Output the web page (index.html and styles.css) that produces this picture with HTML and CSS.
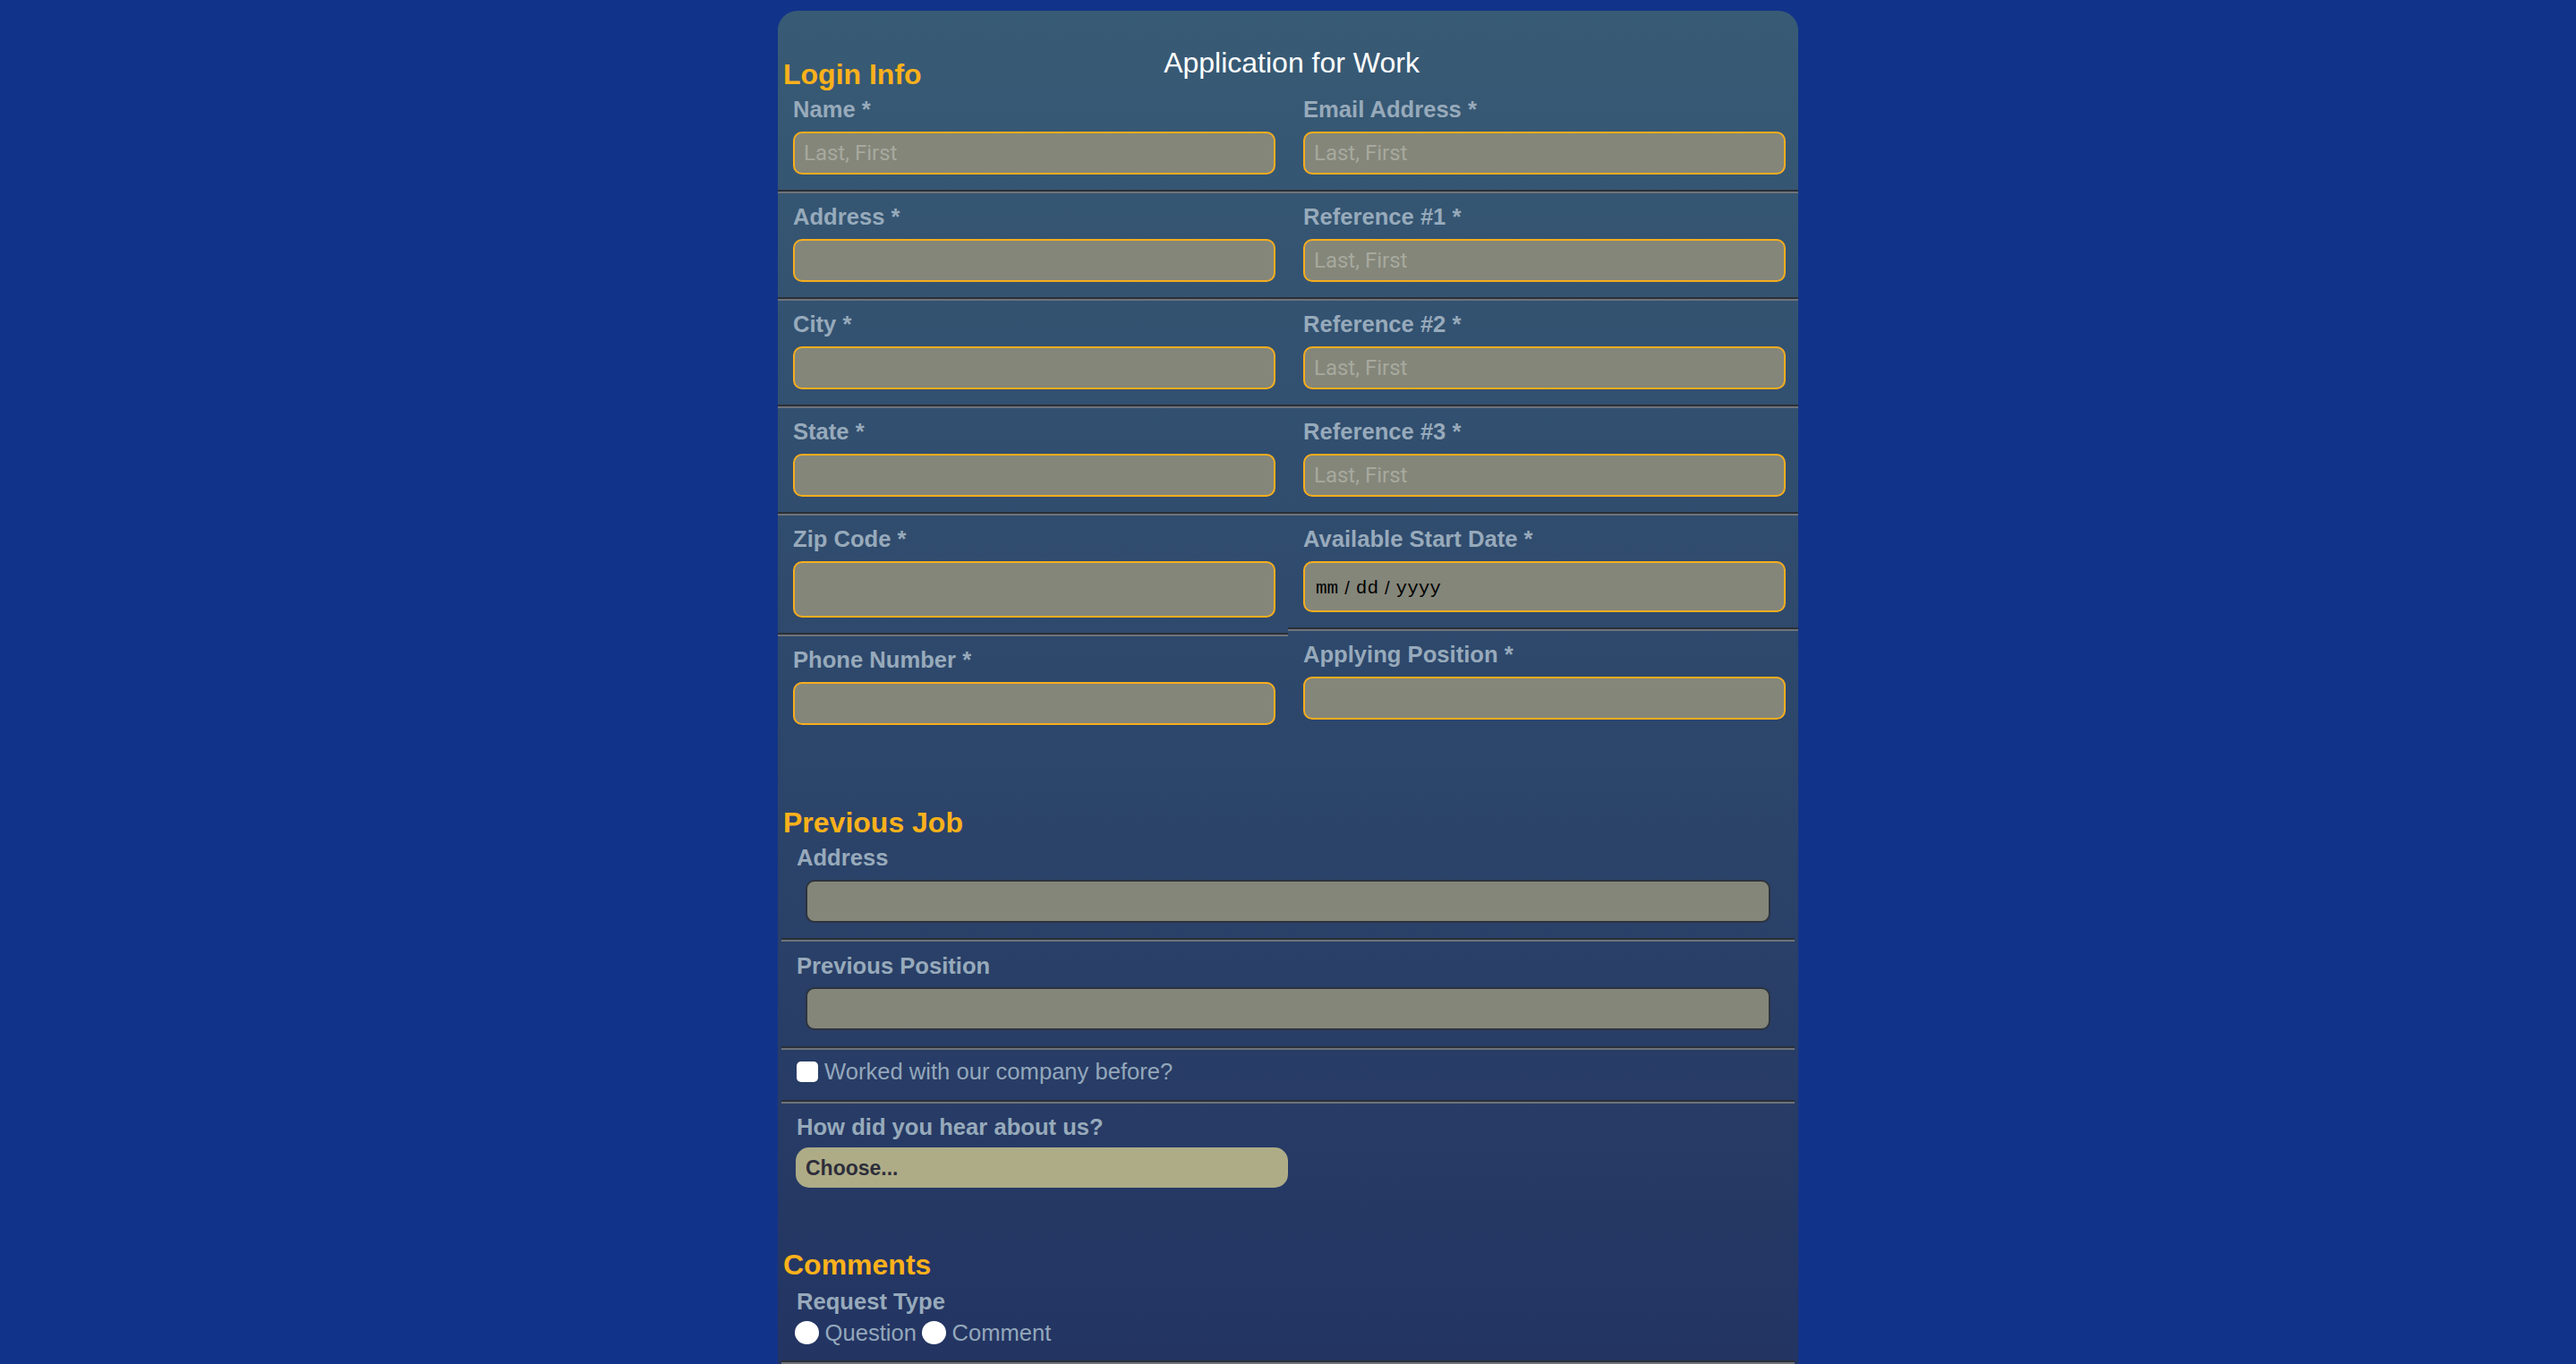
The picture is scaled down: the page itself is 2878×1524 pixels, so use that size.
FILE: index.html
```html
<!DOCTYPE html>
<html lang="en">
<head>
<meta charset="utf-8">
<title>Application for Work</title>
<link rel="stylesheet" href="styles.css">
</head>
<body>
<form class="app">
  <div class="head">
    <h1 class="title">Application for Work</h1>
    <h2 class="section-title login-title">Login Info</h2>
  </div>

  <div class="cols">
    <ul class="col">
      <li class="field"><label>Name *</label><input class="inp" type="text" placeholder="Last, First"></li>
      <li class="field"><label>Address *</label><input class="inp" type="text"></li>
      <li class="field"><label>City *</label><input class="inp" type="text"></li>
      <li class="field"><label>State *</label><input class="inp" type="text"></li>
      <li class="field"><label>Zip Code *</label><input class="inp inp-zip" type="text"></li>
      <li class="field"><label>Phone Number *</label><input class="inp" type="text"></li>
    </ul>
    <ul class="col">
      <li class="field"><label>Email Address *</label><input class="inp" type="text" placeholder="Last, First"></li>
      <li class="field"><label>Reference #1 *</label><input class="inp" type="text" placeholder="Last, First"></li>
      <li class="field"><label>Reference #2 *</label><input class="inp" type="text" placeholder="Last, First"></li>
      <li class="field"><label>Reference #3 *</label><input class="inp" type="text" placeholder="Last, First"></li>
      <li class="field"><label>Available Start Date *</label>
        <div class="inp inp-date" role="textbox"><span class="seg">mm</span><span class="sep">/</span><span class="seg">dd</span><span class="sep">/</span><span class="seg">yyyy</span></div>
      </li>
      <li class="field"><label>Applying Position *</label><input class="inp" type="text"></li>
    </ul>
  </div>

  <h2 class="section-title job-title">Previous Job</h2>
  <ul class="list">
    <li class="field wide"><label>Address</label><input class="inp inp-dark" type="text"></li>
    <li class="field wide"><label>Previous Position</label><input class="inp inp-dark" type="text"></li>
    <li class="field check-row"><input class="check" type="checkbox" id="worked"><label for="worked" class="plain">Worked with our company before?</label></li>
    <li class="field select-row"><label>How did you hear about us?</label>
      <select class="choose">
        <option>Choose...</option>
        <option>Friend</option>
        <option>Website</option>
      </select>
    </li>
  </ul>

  <h2 class="section-title comments-title">Comments</h2>
  <ul class="list">
    <li class="field radio-row"><label>Request Type</label>
      <div class="radios">
        <input class="radio" type="radio" name="req" id="q"><label for="q" class="plain">Question</label>
        <input class="radio" type="radio" name="req" id="c"><label for="c" class="plain">Comment</label>
      </div>
    </li>
  </ul>
</form>
</body>
</html>
```

FILE: styles.css
```css
html {
  scrollbar-width: none;
}
html::-webkit-scrollbar {
  display: none;
}
body {
  margin: 0;
  background: #12338a;
  font-family: "Liberation Sans", Arial, sans-serif;
}
.app {
  width: 1140px;
  margin: 12px auto 0;
  border-radius: 22px 22px 0 0;
  background: linear-gradient(to bottom, #385b75 0px, #233462 1512px);
  padding-bottom: 200px;
}
.head {
  display: grid;
  height: 83.7px;
}
.head > * {
  grid-area: 1 / 1;
}
.title {
  margin: 0;
  padding-top: 46.1px;
  padding-left: 8px;
  font-size: 32px;
  font-weight: normal;
  line-height: 25px;
  color: #ffffff;
  text-align: center;
}
.section-title {
  margin: 0;
  padding-left: 6px;
  font-size: 32px;
  font-weight: bold;
  line-height: 25px;
  color: #fbb11b;
}
.login-title {
  padding-top: 58.7px;
}
.job-title {
  margin-top: 79px;
  line-height: 26px;
}
.comments-title {
  margin-top: 74px;
}
.cols {
  display: grid;
  grid-template-columns: 1fr 1fr;
  align-items: start;
}
.col, .list {
  list-style: none;
  margin: 0;
  padding: 0;
}
.list {
  margin: 0 4px;
}
.field {
  padding: 12.5px 14px 17px 17px;
  border-bottom: 2px solid #2a3038;
  box-shadow: 0 2px 0 #6e737a;
  margin-bottom: 2px;
}
.col .field:last-child {
  border-bottom: none;
  box-shadow: none;
  margin-bottom: 0;
}
.field > label {
  display: block;
  font-size: 25.6px;
  font-weight: bold;
  line-height: 29px;
  color: #97aabb;
  margin-bottom: 9.5px;
}
.inp {
  display: block;
  box-sizing: border-box;
  width: 100%;
  height: 48px;
  margin: 0;
  padding: 0 10px;
  border: 2px solid #f7ad1d;
  border-radius: 10px;
  background: #84867a;
  font-family: Roboto, "Liberation Sans", sans-serif;
  font-size: 24px;
  color: #222;
  outline: none;
}
.inp::placeholder {
  color: #a7a99e;
}
.inp-zip {
  height: 63px;
}
.inp-date {
  display: flex;
  align-items: center;
  height: 57px;
  padding-left: 12px;
  padding-top: 4px;
  font-family: "Liberation Mono", "Courier New", monospace;
  font-size: 21px;
  color: #000;
}
.inp-date .sep {
  font-family: "Liberation Sans", Arial, sans-serif;
  font-size: 20px;
  margin: 0 7px;
}
.wide {
  padding-right: 27px;
  padding-bottom: 17.5px;
}
.inp-dark {
  width: calc(100% - 10px);
  margin-left: 10px;
  border-color: #2d333d;
}
.check-row {
  display: flex;
  align-items: center;
  gap: 7px;
  padding-top: 10.3px;
  padding-bottom: 16.7px;
}
.check, .radio {
  appearance: none;
  -webkit-appearance: none;
  margin: 0;
  background: #ffffff;
  flex: none;
}
.check {
  width: 24px;
  height: 23px;
  border-radius: 5px;
}
.field .plain,
.plain {
  display: inline;
  margin: 0;
  font-size: 25.6px;
  font-weight: normal;
  line-height: 29px;
  color: #93a7bb;
}
.select-row {
  border-bottom: none;
  box-shadow: none;
  margin-bottom: 0;
  padding-left: 16px;
  padding-top: 12px;
  padding-bottom: 0;
}
.select-row > label {
  padding-left: 1px;
  margin-bottom: 8.4px;
}
.choose {
  display: block;
  appearance: none;
  -webkit-appearance: none;
  width: 550px;
  height: 45px;
  margin: 0;
  padding: 0 11px;
  border: none;
  border-radius: 15px;
  background: #aeac87;
  font-family: "Liberation Sans", Arial, sans-serif;
  font-size: 23px;
  font-weight: bold;
  color: #2d2e3a;
}
.radio-row {
  padding-top: 13.6px;
  padding-bottom: 16px;
}
.radio-row > label {
  margin-bottom: 6.3px;
}
.radios {
  display: flex;
  align-items: center;
  margin-left: -2px;
}
.radio {
  width: 27px;
  height: 26px;
  border-radius: 50%;
  margin-right: 6.5px;
}
.radios .plain {
  margin-right: 6px;
}
```
